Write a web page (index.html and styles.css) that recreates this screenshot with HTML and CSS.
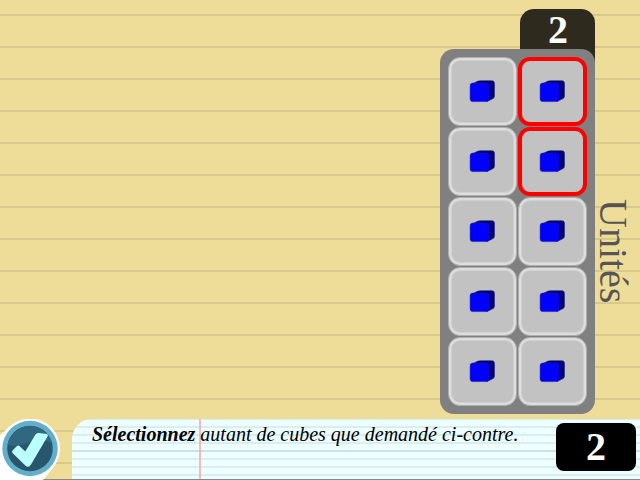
FILE: index.html
```html
<!DOCTYPE html>
<html lang="fr">
<head>
<meta charset="utf-8">
<title>Unités</title>
<link rel="stylesheet" href="styles.css">
</head>
<body>
<svg class="defs" aria-hidden="true">
  <symbol id="cube" viewBox="0 0 28 24">
    <path d="M2.5 4.5 L8 1.6 Q9.4 .8 11.5 .8 H23 Q25.4 .8 25.4 3 V16 Q25.4 18 24 18.6 L18 21.5 Z" fill="#000080" stroke="#15155a" stroke-width=".6"/>
    <rect x="1.1" y="3" width="18.8" height="18.6" rx="2.8" fill="#00f" stroke="#1a1a9a" stroke-width=".5"/>
  </symbol>
</svg>
<main class="board">
  <div class="units">
    <div class="count">2</div>
    <div class="grid">
      <div class="cell"><svg><use href="#cube"/></svg></div>
      <div class="cell selected"><svg><use href="#cube"/></svg></div>
      <div class="cell"><svg><use href="#cube"/></svg></div>
      <div class="cell selected"><svg><use href="#cube"/></svg></div>
      <div class="cell"><svg><use href="#cube"/></svg></div>
      <div class="cell"><svg><use href="#cube"/></svg></div>
      <div class="cell"><svg><use href="#cube"/></svg></div>
      <div class="cell"><svg><use href="#cube"/></svg></div>
      <div class="cell"><svg><use href="#cube"/></svg></div>
      <div class="cell"><svg><use href="#cube"/></svg></div>
    </div>
  </div>
  <div class="label">Unités</div>
</main>
<footer class="bar">
  <svg class="check" viewBox="0 0 72 61">
    <path d="M0 16.5 L9 8 L53 49 L43 61 H0 Z" fill="#fff"/>
    <circle cx="30" cy="29.5" r="30" fill="#fff"/>
    <circle cx="30" cy="29.5" r="27.7" fill="#63aecb"/>
    <circle cx="30" cy="29.5" r="22.8" fill="#28566d"/>
    <path d="M7.5 26 A22.8 22.8 0 0 1 52 24 Q38 17 28 24 Q18 28 7.5 26Z" fill="#316880"/>
    <path d="M13 31 L17 27 Q18.5 25.7 20 27.5 L25.3 32.5 L35.5 15.5 Q36.7 13.6 38.7 14 L46.5 15 Q48.6 15.5 47.5 17.5 L31 45.5 Q28.5 49.5 25.3 46.5 L12.5 34 Q11.3 32.5 13 31Z" fill="#bff"/>
  </svg>
  <div class="sheet">
    <p class="instruction"><b>Sélectionnez</b> autant de cubes que demandé ci-contre.</p>
    <div class="target">2</div>
  </div>
</footer>
</body>
</html>
```
FILE: styles.css
```css
* { box-sizing: border-box; }

body {
  margin: 0;
  width: 640px;
  height: 480px;
  overflow: hidden;
  display: flex;
  flex-direction: column;
  font-family: "Liberation Serif", serif;
  background: repeating-linear-gradient(#ed9 0 14px, #d9c88b 14px 16px, #ed9 16px 32px);
}

.defs { position: absolute; width: 0; height: 0; }

.board {
  height: 419px;
  display: flex;
  justify-content: flex-end;
  align-items: flex-start;
  padding-top: 9px;
}

.units { width: 155px; }

.count {
  width: 75px;
  height: 60px;
  margin: 0 0 -20px auto;
  padding-left: 1px;
  border-radius: 14px 14px 0 0;
  background: #2f2a1e;
  color: #fff;
  font-size: 40px;
  font-weight: bold;
  line-height: 42px;
  text-align: center;
}

.grid {
  position: relative;
  display: grid;
  grid-template-columns: 69px 69px;
  grid-auto-rows: 69px;
  gap: 1px;
  height: 365px;
  padding: 8px;
  border-radius: 14px;
  background: #808080;
}

.cell {
  display: flex;
  justify-content: center;
  align-items: center;
  border: 1px solid #aeaeae;
  border-radius: 12px;
  background: #c2c2c2;
  box-shadow: inset 0 0 0 2px #dedede, inset 0 0 0 3px #d0d0d0;
}

.cell.selected { border: 4px solid #f00; box-shadow: none; }

.cell svg { flex: none; width: 28px; height: 24px; }

.label {
  width: 45px;
  margin-top: 190px;
  padding-right: 9px;
  writing-mode: vertical-rl;
  font-size: 40px;
  line-height: 36px;
  color: #555;
}

.bar {
  display: flex;
  height: 61px;
  border-bottom: 1px solid #888;
}

.check { width: 72px; height: 61px; }

.sheet {
  flex: 1;
  display: flex;
  justify-content: space-between;
  padding: 4px 4px 0 20px;
  border-radius: 20px 0 0 0;
  background:
    linear-gradient(90deg, transparent 127px, rgba(255, 150, 150, .65) 127px 129px, transparent 129px),
    linear-gradient(transparent 31px, #cde1e2 31px 33px, transparent 33px),
    repeating-linear-gradient(#d9edf2 0 1px, #eff 1px 7px, #d9edf2 7px 8px);
}

.instruction {
  margin: 0;
  font-size: 20px;
  line-height: 23px;
  font-style: italic;
  white-space: nowrap;
}

.target {
  width: 80px;
  height: 48px;
  border-radius: 8px;
  background: #000;
  color: #fff;
  font-size: 40px;
  font-weight: bold;
  line-height: 48px;
  text-align: center;
}
```
